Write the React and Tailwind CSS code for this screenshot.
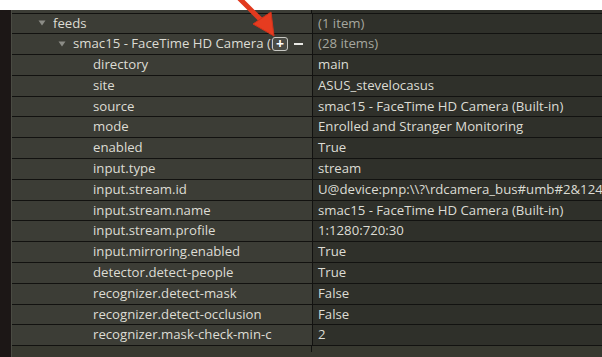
import { Fragment } from 'react';

const rows = [
  { key: 'feeds', value: '(1 item)', level: 1, branch: true },
  { key: 'smac15 - FaceTime HD Camera (Built-in)', value: '(28 items)', level: 2, branch: true, hover: true },
  { key: 'directory', value: 'main', level: 3 },
  { key: 'site', value: 'ASUS_stevelocasus', level: 3 },
  { key: 'source', value: 'smac15 - FaceTime HD Camera (Built-in)', level: 3 },
  { key: 'mode', value: 'Enrolled and Stranger Monitoring', level: 3 },
  { key: 'enabled', value: 'True', level: 3 },
  { key: 'input.type', value: 'stream', level: 3 },
  { key: 'input.stream.id', value: 'U@device:pnp:\\\\?\\rdcamera_bus#umb#2&124f5c3d&0&0000', level: 3 },
  { key: 'input.stream.name', value: 'smac15 - FaceTime HD Camera (Built-in)', level: 3 },
  { key: 'input.stream.profile', value: '1:1280:720:30', level: 3 },
  { key: 'input.mirroring.enabled', value: 'True', level: 3 },
  { key: 'detector.detect-people', value: 'True', level: 3 },
  { key: 'recognizer.detect-mask', value: 'False', level: 3 },
  { key: 'recognizer.detect-occlusion', value: 'False', level: 3 },
  { key: 'recognizer.mask-check-min-coverage', value: '2', level: 3 },
];

const indent = { 1: 'pl-[26px]', 2: 'pl-[46px]', 3: 'pl-[81px]' };

function Caret() {
  return (
    <span className="w-[15px] shrink-0 flex items-center">
      <svg width="8" height="6" viewBox="0 0 8 6">
        <path d="M0.5 0.5 L7.5 0.5 L4 5.5 Z" fill="#8b8c86" />
      </svg>
    </span>
  );
}

function Row({ row }) {
  return (
    <div className="flex h-[20.8px] border-b border-[#121210]">
      <div className={`w-[300px] shrink-0 flex items-center bg-[#3c3d36] ${indent[row.level]}`}>
        {row.branch && <Caret />}
        <span className="flex-1 overflow-hidden whitespace-nowrap">{row.key}</span>
        <span className="w-[40px] shrink-0 flex items-center gap-[6px]">
          {row.hover && (
            <Fragment>
              <span className="w-[16px] h-[14px] rounded-[3px] border border-[#c9c9c4] bg-[#4a4b45] flex items-center justify-center text-white font-bold text-[14px] leading-none">
                +
              </span>
              <span className="w-[9px] h-[2px] bg-[#e8e8e4]" />
            </Fragment>
          )}
        </span>
      </div>
      <div className="w-px shrink-0 bg-[#121210]" />
      <div
        className={`flex-1 flex items-center pl-[5px] overflow-hidden whitespace-nowrap bg-[#2f302a] ${
          row.branch ? 'text-[#a6a79f]' : ''
        }`}
      >
        {row.value}
      </div>
    </div>
  );
}

export default function App() {
  return (
    <div
      className="relative w-[602px] h-[357px] overflow-hidden bg-white text-[13.2px] text-[#dcdcd4]"
      style={{ fontFamily: '"Open Sans", "Noto Sans", sans-serif' }}
    >
      <div className="h-[10px] bg-white" />
      <div className="flex h-[347px]">
        <div className="w-[11px] shrink-0 bg-[#1c1716]" />
        <div className="flex-1 flex flex-col bg-[#383930] border-l border-[#4a4b43]">
          <div className="flex h-[3.5px] border-b border-[#121210]">
            <div className="w-[299px] shrink-0 bg-[#3c3d36]" />
            <div className="w-px shrink-0 bg-[#121210]" />
            <div className="flex-1 bg-[#2f302a]" />
          </div>
          {rows.map((row) => (
            <Row key={row.key} row={row} />
          ))}
          <div className="flex h-[6px]">
            <div className="w-[299px] shrink-0" />
            <div className="w-px shrink-0 bg-[#121210]" />
          </div>
        </div>
      </div>

      <svg className="absolute left-0 top-0 pointer-events-none" width="602" height="60" viewBox="0 0 602 60">
        <line x1="239" y1="-2" x2="262" y2="21" stroke="#e23a1f" strokeWidth="5" strokeLinecap="round" />
        <path d="M253 24 L271 12 L274 36 Z" fill="#e63c20" stroke="#d0321a" strokeWidth="1" strokeLinejoin="round" />
      </svg>
    </div>
  );
}
